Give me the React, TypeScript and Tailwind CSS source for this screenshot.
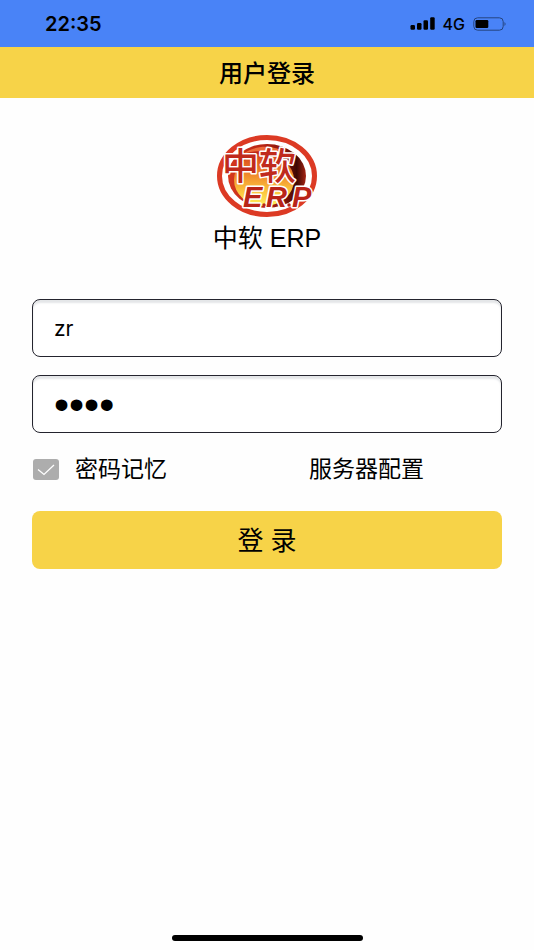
import { useState } from 'react';
import type { FormEvent } from 'react';

function StatusBar() {
  return (
    <div className="flex h-[47px] items-center justify-between bg-[#4983f7] pl-[45px] pr-[27px] font-['Inter','Liberation_Sans',sans-serif] text-black">
      <span className="text-[20px] font-semibold leading-6">22:35</span>
      <div className="flex items-center gap-2">
        <svg width="25" height="13" viewBox="0 0 25 13" aria-hidden="true">
          <rect x="0.5" y="8" width="4.5" height="4.7" rx="1.2" />
          <rect x="7" y="6" width="4.5" height="6.7" rx="1.2" />
          <rect x="13.5" y="3.2" width="4.5" height="9.5" rx="1.2" />
          <rect x="20.2" y="0.3" width="4.5" height="12.4" rx="1.2" />
        </svg>
        <span className="text-[16px] font-medium leading-5">4G</span>
        <svg width="34" height="14" viewBox="0 0 34 14" aria-hidden="true">
          <rect x="0.8" y="0.8" width="29.4" height="12.4" rx="3.8" fill="none" stroke="#25447f" strokeWidth="1" />
          <rect x="2.5" y="3" width="12.8" height="8" rx="1.2" />
          <path d="M31.5 5 Q33.6 7 31.5 9 Z" fill="#25447f" />
        </svg>
      </div>
    </div>
  );
}

function Logo() {
  return (
    <svg width="102" height="84" viewBox="0 0 102 84" role="img" aria-label="中软 ERP">
      <defs>
        <linearGradient id="glow" x1="0" y1="0" x2="0" y2="1">
          <stop offset="0" stopColor="#d8431c" />
          <stop offset="0.4" stopColor="#f08a2c" />
          <stop offset="0.7" stopColor="#fbc23d" />
          <stop offset="1" stopColor="#fff05a" />
        </linearGradient>
        <linearGradient id="shade" x1="0" y1="0" x2="1" y2="0">
          <stop offset="0" stopColor="#d6391f" />
          <stop offset="0.45" stopColor="#b82414" />
          <stop offset="0.75" stopColor="#7a1208" />
          <stop offset="0.88" stopColor="#3c0703" />
          <stop offset="1" stopColor="#a82413" />
        </linearGradient>
      </defs>
      <ellipse cx="51" cy="42" rx="47.5" ry="38.5" fill="#fff" stroke="#dc3a24" strokeWidth="5" />
      <ellipse cx="51" cy="42" rx="39" ry="32" fill="url(#shade)" />
      {/* Flame inside the dark disc */}
      <ellipse cx="48" cy="46" rx="30" ry="26" fill="url(#glow)" />
      <path d="M27 20 C42 9 62 11 77 23 C62 16 42 15 27 20 Z" fill="#ec6a3a" />
      <g
        fill="#c02a1c"
        stroke="#fff"
        strokeWidth="3"
        strokeLinejoin="round"
        paintOrder="stroke"
        className="font-['Noto_Sans_CJK_SC',sans-serif]"
      >
        <text x="6" y="46" fontSize="37" fontWeight="500">中软</text>
      </g>
      <g
        fill="#b92418"
        stroke="#fff"
        strokeWidth="3"
        strokeLinejoin="round"
        paintOrder="stroke"
        className="font-['Liberation_Sans',sans-serif]"
      >
        <text x="27" y="73" fontSize="29" fontWeight="700" fontStyle="italic">E</text>
        <text x="50" y="73" fontSize="29" fontWeight="700" fontStyle="italic">R</text>
        <text x="76" y="73" fontSize="29" fontWeight="700" fontStyle="italic">P</text>
      </g>
      <circle cx="48" cy="71" r="1.7" fill="#b92418" />
      <circle cx="73" cy="71" r="1.7" fill="#b92418" />
    </svg>
  );
}

export default function App() {
  const [username, setUsername] = useState('zr');
  const [password, setPassword] = useState('1234');
  const [remember, setRemember] = useState(true);

  const handleSubmit = (e: FormEvent) => {
    e.preventDefault();
  };

  return (
    <div className="flex min-h-screen flex-col bg-[#fefefe] font-['Liberation_Sans','Noto_Sans_CJK_SC',sans-serif] text-black">
      <StatusBar />

      <header className="flex h-[51px] items-center justify-center bg-[#f7d348] pb-0.5">
        <h1 className="text-[24px] font-medium leading-8 font-['Noto_Sans_CJK_SC',sans-serif]">用户登录</h1>
      </header>

      <main className="px-8 pt-9">
        {/* Brand */}
        <div className="flex flex-col items-center gap-1">
          <Logo />
          <p className="text-[25px] leading-8">中软 ERP</p>
        </div>

        {/* Login form */}
        <form onSubmit={handleSubmit} className="mt-[45px] flex flex-col">
          <input
            type="text"
            aria-label="用户名"
            value={username}
            onChange={e => setUsername(e.target.value)}
            className="h-[58px] w-full rounded-lg border border-[#24242e] bg-white px-[21px] font-['Inter','Noto_Sans_CJK_SC',sans-serif] text-[21px] shadow-[inset_0_3px_2px_#e4e6e8] outline-none"
          />
          <input
            type="password"
            aria-label="密码"
            value={password}
            onChange={e => setPassword(e.target.value)}
            className="mt-[18px] h-[58px] w-full rounded-lg border border-[#24242e] bg-white px-[21px] font-['Liberation_Sans',sans-serif] text-[43px] shadow-[inset_0_3px_2px_#e4e6e8] outline-none"
          />

          <div className="mt-5 flex items-center justify-between pl-px pr-[78px] text-[23px] leading-8">
            <label className="flex items-center gap-4">
              <span className="relative flex">
                <input
                  type="checkbox"
                  checked={remember}
                  onChange={e => setRemember(e.target.checked)}
                  className="peer h-[21px] w-[26px] appearance-none rounded-[3px] bg-[#adadad]"
                />
                <svg
                  className="pointer-events-none absolute inset-0 hidden peer-checked:block"
                  width="26"
                  height="21"
                  viewBox="0 0 26 21"
                  fill="none"
                  stroke="#fff"
                  strokeWidth="1.3"
                >
                  <path d="M5 10.5 L11 15.5 L21 6" />
                </svg>
              </span>
              密码记忆
            </label>
            <a href="#server">服务器配置</a>
          </div>

          <button type="submit" className="mt-[26px] h-[58px] w-full rounded-lg bg-[#f7d348] pt-0.5 text-[26px]">
            登 录
          </button>
        </form>
      </main>

      {/* Home indicator */}
      <div className="mx-auto mb-[9px] mt-auto h-1.5 w-[191px] rounded-full bg-black" />
    </div>
  );
}
